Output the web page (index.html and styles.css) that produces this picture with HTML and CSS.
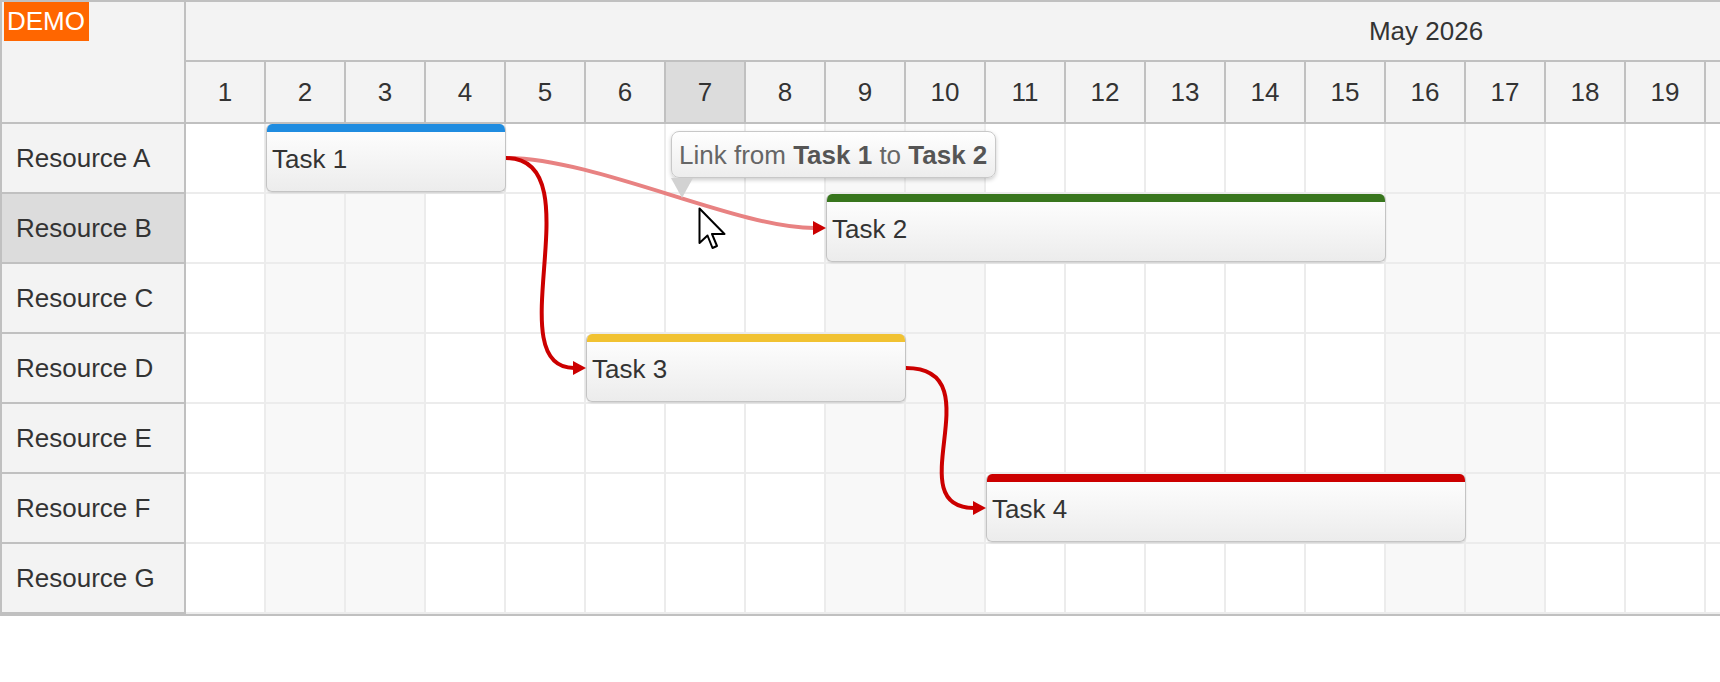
FILE: index.html
```html
<!DOCTYPE html>
<html lang="en">
<head>
<meta charset="UTF-8">
<meta name="viewport" content="width=device-width, initial-scale=1.0">
<title>Scheduler - Task Links</title>
<link rel="stylesheet" href="styles.css">
</head>
<body>

<div class="scheduler">
    <div class="corner">
        <span class="demo">DEMO</span>
    </div>
    <div class="timeline-header">
        <div class="month">May 2026</div>
        <div class="days" id="days"></div>
    </div>
    <div class="resources" id="resources"></div>
    <div class="grid" id="grid">
        <div class="rows" id="rows"></div>
        <svg class="links" id="links" xmlns="http://www.w3.org/2000/svg"></svg>
        <div class="bubble">Link from <b>Task 1</b> to <b>Task 2</b></div>
        <svg class="pointer" width="30" height="44" viewBox="0 0 30 44">
            <polygon points="1.5,1.5 1.5,36 9.5,28.5 14.5,41 19,39 14,27 26.5,27" fill="#fff" stroke="#000" stroke-width="2" stroke-linejoin="round"/>
        </svg>
    </div>
</div>

<script>
var cellWidth = 80;
var rowHeight = 70;
var daysInMonth = 31;
var hoverDay = 7;
var hoverRow = 1;

var resources = ["Resource A", "Resource B", "Resource C", "Resource D", "Resource E", "Resource F", "Resource G"];

var tasks = [
    { id: 1, text: "Task 1", row: 0, start: 2, end: 4, color: "#1f8ce0" },
    { id: 2, text: "Task 2", row: 1, start: 9, end: 15, color: "#38761d" },
    { id: 3, text: "Task 3", row: 3, start: 6, end: 9, color: "#f1c232" },
    { id: 4, text: "Task 4", row: 5, start: 11, end: 16, color: "#cc0000" }
];

var links = [
    { from: 1, to: 2, hover: true },
    { from: 1, to: 3 },
    { from: 3, to: 4 }
];

function isWeekend(day) {
    var dow = new Date(2026, 4, day).getDay();
    return dow === 0 || dow === 6;
}

// Day header
var daysEl = document.getElementById("days");
for (var d = 1; d <= daysInMonth; d++) {
    var day = document.createElement("div");
    day.className = "day" + (d === hoverDay ? " hover" : "");
    day.textContent = d;
    daysEl.appendChild(day);
}

// Row headers and cells
var resEl = document.getElementById("resources");
var rowsEl = document.getElementById("rows");
resources.forEach(function (name, i) {
    var res = document.createElement("div");
    res.className = "resource" + (i === hoverRow ? " hover" : "");
    res.textContent = name;
    resEl.appendChild(res);

    var row = document.createElement("div");
    row.className = "row";
    for (var d = 1; d <= daysInMonth; d++) {
        var cell = document.createElement("div");
        cell.className = "cell" + (isWeekend(d) ? " weekend" : "");
        row.appendChild(cell);
    }
    rowsEl.appendChild(row);
});

// Tasks
var gridEl = document.getElementById("grid");
var linksEl = document.getElementById("links");
tasks.forEach(function (t) {
    var el = document.createElement("div");
    el.className = "task";
    el.style.left = (t.start - 1) * cellWidth + "px";
    el.style.top = t.row * rowHeight + "px";
    el.style.width = (t.end - t.start + 1) * cellWidth + "px";
    el.style.setProperty("--bar", t.color);
    el.textContent = t.text;
    gridEl.insertBefore(el, linksEl);
});

function findTask(id) {
    return tasks.filter(function (t) { return t.id === id; })[0];
}

// Links: curved line from the end of one task to the start of the next
var ns = "http://www.w3.org/2000/svg";
links.forEach(function (l) {
    var a = findTask(l.from);
    var b = findTask(l.to);
    var x1 = a.end * cellWidth;
    var y1 = a.row * rowHeight + 34;
    var x2 = (b.start - 1) * cellWidth;
    var y2 = b.row * rowHeight + 34;

    var path = document.createElementNS(ns, "path");
    path.setAttribute("d", "M" + x1 + "," + y1 + " C" + (x1 + 90) + "," + y1 + " " + (x2 - 90) + "," + y2 + " " + (x2 - 12) + "," + y2);
    path.setAttribute("class", "link-line" + (l.hover ? " hover" : ""));
    linksEl.appendChild(path);

    var arrow = document.createElementNS(ns, "polygon");
    arrow.setAttribute("points", (x2 - 13) + "," + (y2 - 7) + " " + x2 + "," + y2 + " " + (x2 - 13) + "," + (y2 + 7));
    arrow.setAttribute("class", "link-arrow");
    linksEl.appendChild(arrow);
});
</script>

</body>
</html>
```

FILE: styles.css
```css
body {
    margin: 0;
    font-family: "Liberation Sans", Arial, sans-serif;
    background-color: #fff;
    overflow: hidden;
}

.scheduler {
    position: relative;
    display: grid;
    grid-template-columns: 184px 2480px;
    grid-template-rows: 122px auto;
    width: max-content;
    border-top: 2px solid #c0c0c0;
    border-left: 2px solid #c0c0c0;
    border-bottom: 2px solid #c0c0c0;
    color: #333;
    font-size: 26px;
}

/* Top left corner */
.corner {
    box-sizing: border-box;
    background-color: #f3f3f3;
    border-right: 2px solid #c0c0c0;
    border-bottom: 2px solid #c0c0c0;
}

.demo {
    display: inline-block;
    margin-left: 2px;
    padding: 0 4px 0 3px;
    height: 39px;
    line-height: 38px;
    background-color: #ff6600;
    color: #fff;
}

/* Time header */
.timeline-header {
    background-color: #f3f3f3;
}

.month {
    box-sizing: border-box;
    height: 60px;
    border-bottom: 2px solid #c0c0c0;
    display: flex;
    align-items: center;
    justify-content: center;
}

.days {
    display: flex;
}

.day {
    box-sizing: border-box;
    width: 80px;
    height: 62px;
    border-right: 2px solid #c0c0c0;
    border-bottom: 2px solid #c0c0c0;
    display: flex;
    align-items: center;
    justify-content: center;
}

.day.hover {
    background-color: #dcdcdc;
}

/* Row headers */
.resource {
    box-sizing: border-box;
    height: 70px;
    padding: 1px 0 0 14px;
    background-color: #f3f3f3;
    border-right: 2px solid #c0c0c0;
    border-bottom: 2px solid #c0c0c0;
    display: flex;
    align-items: center;
}

.resource.hover {
    background-color: #dcdcdc;
}

/* Grid */
.grid {
    position: relative;
}

.row {
    display: flex;
}

.cell {
    box-sizing: border-box;
    width: 80px;
    height: 70px;
    border-right: 2px solid #ececec;
    border-bottom: 2px solid #ececec;
}

.cell.weekend {
    background-color: #f8f8f8;
}

/* Tasks */
.task {
    position: absolute;
    box-sizing: border-box;
    height: 68px;
    padding: 3px 0 0 5px;
    border: 1px solid #c4c4c4;
    border-top: none;
    border-radius: 6px;
    overflow: hidden;
    background: linear-gradient(#ffffff, #ececec);
    box-shadow: 0 1px 2px rgba(0, 0, 0, 0.12);
    display: flex;
    align-items: center;
}

.task::before {
    content: "";
    position: absolute;
    top: 0;
    left: 0;
    right: 0;
    height: 8px;
    background-color: var(--bar);
}

/* Links */
.links {
    position: absolute;
    top: 0;
    left: 0;
    width: 100%;
    height: 100%;
    overflow: visible;
    pointer-events: none;
}

.link-line {
    fill: none;
    stroke: #cc0000;
    stroke-width: 4;
}

.link-line.hover {
    stroke: #e88282;
}

.link-arrow {
    fill: #cc0000;
}

/* Link tooltip */
.bubble {
    position: absolute;
    left: 485px;
    top: 7px;
    box-sizing: border-box;
    height: 47px;
    padding: 1px 8px 0 7px;
    border: 1px solid #c8c8c8;
    border-radius: 8px;
    background: linear-gradient(#ffffff, #ededed);
    box-shadow: 0 2px 4px rgba(0, 0, 0, 0.2);
    color: #666;
    line-height: 45px;
    white-space: nowrap;
}

.bubble b {
    color: #555;
}

.bubble::after {
    content: "";
    position: absolute;
    left: -1px;
    top: 46px;
    border-left: 11px solid transparent;
    border-right: 11px solid transparent;
    border-top: 20px solid #d2d2d2;
}

.pointer {
    position: absolute;
    left: 512px;
    top: 83px;
}
```
